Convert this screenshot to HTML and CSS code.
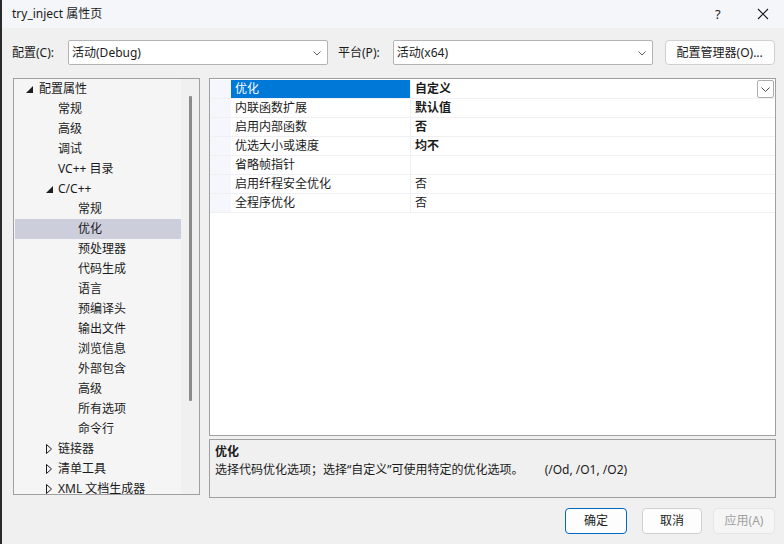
FILE: index.html
```html
<!DOCTYPE html>
<html>
<head>
<meta charset="utf-8">
<link rel="stylesheet" href="styles.css">
</head>
<body>
<div class="win">
  <div class="titlebar">
    <span class="title">try_inject 属性页</span>
    <span class="tb-help">?</span>
    <svg class="tb-close" width="12" height="12" viewBox="0 0 12 12"><path d="M1 1L11 11M11 1L1 11" stroke="#1a1a1a" stroke-width="1.1" fill="none"/></svg>
  </div>

  <div class="toolbar">
    <span class="lbl">配置(C):</span>
    <div class="combo combo-cfg"><span>活动(Debug)</span><svg class="chev" width="8" height="5" viewBox="0 0 8 5"><path d="M0.5 0.5L4 4L7.5 0.5" stroke="#606060" fill="none"/></svg></div>
    <span class="lbl lbl-plat">平台(P):</span>
    <div class="combo combo-plat"><span>活动(x64)</span><svg class="chev" width="8" height="5" viewBox="0 0 8 5"><path d="M0.5 0.5L4 4L7.5 0.5" stroke="#606060" fill="none"/></svg></div>
    <button class="btn btn-mgr">配置管理器(O)...</button>
  </div>

  <div class="main">
    <div class="tree">
      <div class="tree-list">
        <div class="node l0"><svg class="tri" width="7" height="7" viewBox="0 0 7 7"><path d="M7 0L7 7L0 7Z" fill="#1e1e1e"/></svg>配置属性</div>
        <div class="node l1">常规</div>
        <div class="node l1">高级</div>
        <div class="node l1">调试</div>
        <div class="node l1">VC++ 目录</div>
        <div class="node l1 exp"><svg class="tri" width="7" height="7" viewBox="0 0 7 7"><path d="M7 0L7 7L0 7Z" fill="#1e1e1e"/></svg>C/C++</div>
        <div class="node l2">常规</div>
        <div class="node l2 sel">优化</div>
        <div class="node l2">预处理器</div>
        <div class="node l2">代码生成</div>
        <div class="node l2">语言</div>
        <div class="node l2">预编译头</div>
        <div class="node l2">输出文件</div>
        <div class="node l2">浏览信息</div>
        <div class="node l2">外部包含</div>
        <div class="node l2">高级</div>
        <div class="node l2">所有选项</div>
        <div class="node l2">命令行</div>
        <div class="node l1 exp"><svg class="tri tri-c" width="6" height="10" viewBox="0 0 6 10"><path d="M0.5 0.5L5.5 5L0.5 9.5Z" stroke="#1e1e1e" fill="none"/></svg>链接器</div>
        <div class="node l1 exp"><svg class="tri tri-c" width="6" height="10" viewBox="0 0 6 10"><path d="M0.5 0.5L5.5 5L0.5 9.5Z" stroke="#1e1e1e" fill="none"/></svg>清单工具</div>
        <div class="node l1 exp"><svg class="tri tri-c" width="6" height="10" viewBox="0 0 6 10"><path d="M0.5 0.5L5.5 5L0.5 9.5Z" stroke="#1e1e1e" fill="none"/></svg>XML 文档生成器</div>
      </div>
      <div class="vscroll"><div class="thumb"></div></div>
    </div>

    <div class="right">
      <div class="grid">
        <div class="rows">
          <div class="row selrow"><div class="gut"></div><div class="name">优化</div><div class="val b">自定义<span class="ddbtn"><svg width="9" height="5" viewBox="0 0 9 5"><path d="M0.5 0.5L4.5 4.5L8.5 0.5" stroke="#505050" fill="none"/></svg></span></div></div>
          <div class="row"><div class="gut"></div><div class="name">内联函数扩展</div><div class="val b">默认值</div></div>
          <div class="row"><div class="gut"></div><div class="name">启用内部函数</div><div class="val b">否</div></div>
          <div class="row"><div class="gut"></div><div class="name">优选大小或速度</div><div class="val b">均不</div></div>
          <div class="row"><div class="gut"></div><div class="name">省略帧指针</div><div class="val"></div></div>
          <div class="row"><div class="gut"></div><div class="name">启用纤程安全优化</div><div class="val">否</div></div>
          <div class="row"><div class="gut"></div><div class="name">全程序优化</div><div class="val">否</div></div>
        </div>
      </div>
      <div class="desc">
        <div class="desc-title">优化</div>
        <div class="desc-text">选择代码优化选项；选择“自定义”可使用特定的优化选项。<span class="desc-sw">(/Od, /O1, /O2)</span></div>
      </div>
    </div>
  </div>

  <div class="footer">
    <button class="btn btn-ok">确定</button>
    <button class="btn btn-cancel">取消</button>
    <button class="btn btn-apply">应用(A)</button>
  </div>
</div>
</body>
</html>
```

FILE: styles.css
```css
* { box-sizing: border-box; }
html, body {
  margin: 0;
  padding: 0;
  width: 784px;
  height: 544px;
  overflow: hidden;
  background: #f0f0f0;
  font-family: "Noto Sans", "Noto Sans CJK SC", sans-serif;
  font-size: 12px;
  color: #1b1b1b;
}
.win {
  width: 784px;
  height: 544px;
  border-left: 2px solid #2a2a2a;
  display: flex;
  flex-direction: column;
}
.titlebar {
  height: 28px;
  background: #f4f6f9;
  display: flex;
  align-items: center;
  padding-left: 10px;
  position: relative;
}
.title { font-size: 12px; line-height: 16px; }
.tb-help {
  position: absolute;
  left: 713px;
  top: 5px;
  font-size: 13px;
}
.tb-close {
  position: absolute;
  left: 755px;
  top: 8px;
}
.toolbar {
  margin-top: 12px;
  height: 25px;
  display: flex;
  align-items: center;
  padding-left: 10px;
}
.lbl { line-height: 16px; }
.combo {
  height: 25px;
  background: #fff;
  border: 1px solid #b4b4b4;
  border-radius: 2px;
  display: flex;
  align-items: center;
  justify-content: space-between;
  padding: 0 6px 0 3px;
  line-height: 16px;
}
.combo-cfg { margin-left: 14px; width: 260px; }
.lbl-plat { margin-left: 10px; }
.combo-plat { margin-left: 13px; width: 260px; }
.chev { margin-top: 1px; }
.btn {
  font-family: inherit;
  font-size: 12px;
  color: #1b1b1b;
  background: #fdfdfd;
  border: 1px solid #d0d0d0;
  border-radius: 4px;
  padding: 0;
  line-height: 16px;
}
.btn-mgr { margin-left: 12px; width: 110px; height: 25px; }
.main {
  margin-top: 13px;
  display: flex;
  padding-left: 11px;
  height: 420px;
}
.tree {
  width: 187px;
  height: 417px;
  border: 1px solid #a0a0a0;
  background: #f5f5f5;
  display: flex;
  overflow: hidden;
}
.tree-list { flex: 1; padding-left: 1px; }
.node {
  height: 20px;
  line-height: 20px;
  position: relative;
  white-space: nowrap;
}
.l0 { padding-left: 24px; }
.l1 { padding-left: 43px; }
.l2 { padding-left: 63px; }
.tri { position: absolute; }
.l0 .tri { left: 11px; top: 7px; }
.l1 .tri { left: 31px; top: 7px; }
.l1 .tri-c { top: 5px; }
.sel { background: #cccedb; }
.vscroll {
  width: 18px;
  background: #f0f0f0;
  padding-top: 17px;
  display: flex;
  justify-content: center;
}
.thumb {
  width: 3px;
  height: 305px;
  background: #8b8b8b;
  border-radius: 1px;
}
.right {
  margin-left: 9px;
  width: 567px;
  display: flex;
  flex-direction: column;
}
.grid {
  height: 360px;
  border: 1px solid #a0a0a0;
  background: #fff;
  padding-top: 1px;
}
.row {
  display: flex;
  height: 19px;
  border-bottom: 1px solid #f0f0f4;
}
.gut { width: 21px; background: #f5f7fc; }
.name {
  width: 180px;
  padding-left: 4px;
  line-height: 18px;
  border-right: 1px solid #f0f0f4;
}
.selrow .name { background: #0078d7; color: #fff; }
.val {
  flex: 1;
  padding-left: 4px;
  line-height: 18px;
  position: relative;
}
.b { font-weight: bold; }
.ddbtn {
  position: absolute;
  right: 1px;
  top: 0;
  width: 17px;
  height: 18px;
  border: 1px solid #adadad;
  background: #fff;
  border-radius: 2px;
  display: flex;
  align-items: center;
  justify-content: center;
}
.desc {
  margin-top: 3px;
  height: 59px;
  border: 1px solid #a0a0a0;
  background: #f0f0f0;
  padding: 3px 5px;
}
.desc-title { font-weight: bold; line-height: 18px; }
.desc-text { line-height: 18px; white-space: nowrap; }
.desc-sw { margin-left: 21px; }
.footer {
  margin-top: 10px;
  display: flex;
  justify-content: flex-end;
  padding-right: 9px;
  gap: 14px;
}
.btn-ok, .btn-cancel, .btn-apply { width: 62px; height: 26px; }
.btn-ok { border-color: #0067c0; margin-right: 1px; }
.btn-cancel { width: 60px; }
.btn-apply { background: #f5f5f5; border-color: #e5e5e5; color: #a0a0a0; margin-left: -3px; }
```
